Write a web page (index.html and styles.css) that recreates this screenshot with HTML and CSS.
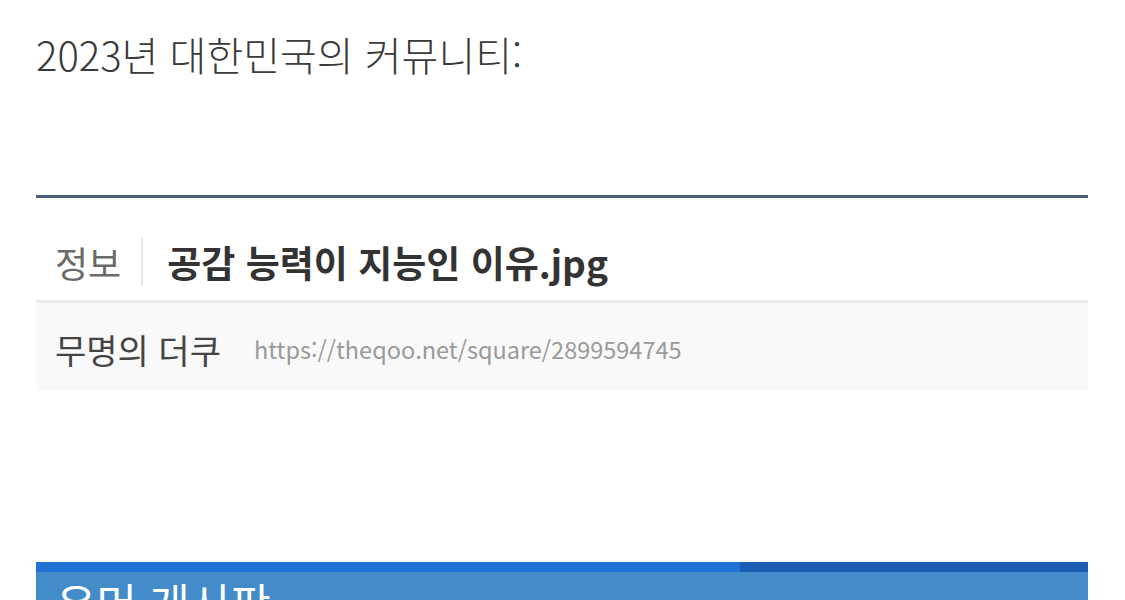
FILE: index.html
```html
<!DOCTYPE html>
<html lang="ko">
<head>
    <meta charset="UTF-8">
    <title>2023년 대한민국의 커뮤니티</title>
    <link rel="stylesheet" href="styles.css">
</head>
<body>
    <h1 class="headline">2023년 대한민국의 커뮤니티:</h1>

    <!-- 게시글 캡처 -->
    <div class="post">
      <div class="post-title">
        <span class="cate">정보</span>
        <span class="subject">공감 능력이 지능인 이유.jpg</span>
      </div>
      <div class="post-meta">
        <span class="writer">무명의 더쿠</span>
        <span class="link">https://theqoo.net/square/2899594745</span>
      </div>
    </div>

    <!-- 게시판 캡처 -->
    <div class="board">
      <div class="board-bar"></div>
      <div class="board-head">유머 게시판</div>
    </div>
</body>
</html>
```

FILE: styles.css
```css
body{
   margin: 0;
   padding: 0 37px 0 36px;
   background: #fff;
   font-family: "Noto Sans CJK KR", "Noto Sans", sans-serif;
   overflow: hidden;
   height: 600px;
}

.headline{
   margin: 29px 0 0;
   font-size: 40px;
   font-weight: 300;
   line-height: 50px;
   color: #3a3a3a;
}

/* 게시글 */
.post{
   margin-top: 116px;
   border-top: 3px solid #4b6079;
}
.post-title{
   display: flex;
   align-items: center;
   height: 76px;
   padding: 26px 0 0 19px;
   border-bottom: 3px solid #ebebeb;
}
.cate{
   font-size: 36px;
   color: #6a6a6a;
   padding-right: 20px;
   border-right: 2px solid #e6e6e6;
   line-height: 48px;
}
.subject{
   margin-left: 24px;
   font-size: 37px;
   font-weight: 700;
   color: #333;
}
.post-meta{
   display: flex;
   align-items: center;
   height: 84px;
   padding: 4px 0 0 19px;
   background: #f9f9f9;
}
.writer{
   font-size: 34px;
   color: #444;
}
.link{
   margin-left: 33px;
   font-size: 23.5px;
   color: #9a9a9a;
}

/* 게시판 */
.board{
   margin-top: 171px;
}
.board-bar{
   height: 10px;
   background: linear-gradient(to right, #2172d6 0 704px, #1b5db5 704px);
}
.board-head{
   height: 60px;
   padding: 0 0 0 20px;
   background: #438bc9;
   color: #fff;
   font-size: 44px;
   line-height: 60px;
}
```
